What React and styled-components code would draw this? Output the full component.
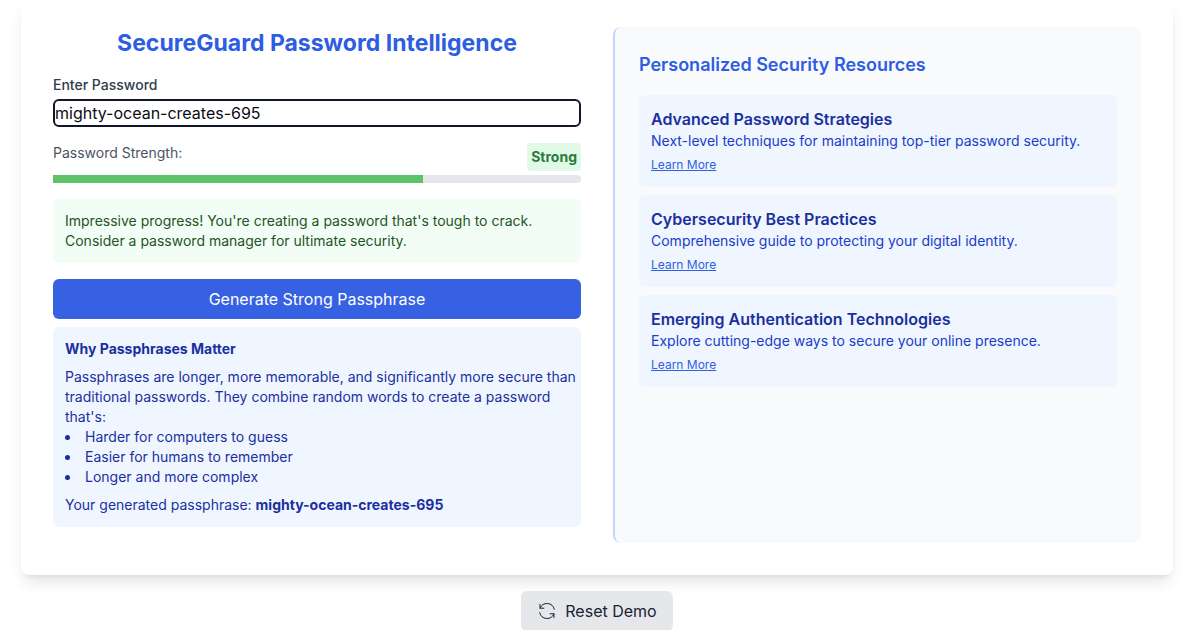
import React, { useState } from "react";
import styled, { createGlobalStyle } from "styled-components";

const GlobalStyle = createGlobalStyle`
  *, *::before, *::after { box-sizing: border-box; }
  body {
    margin: 0;
    background: #fff;
    font-family: Inter, "Liberation Sans", sans-serif;
    font-size: 16px;
    line-height: 24px;
    color: #1f2937;
  }
  h1, h2, h3, p, ul { margin: 0; padding: 0; }
  button, input { font: inherit; }
`;

const Page = styled.div`
  display: flex;
  flex-direction: column;
  align-items: center;
  gap: 16px;
  padding: 0 27px 0 21px;
`;

const Card = styled.main`
  display: grid;
  grid-template-columns: 1fr 1fr;
  gap: 32px;
  width: 100%;
  padding: 27px 32px 32px;
  background: #fff;
  border-radius: 0 0 8px 8px;
  box-shadow: 0 10px 15px -3px rgba(0, 0, 0, 0.1), 0 4px 6px -4px rgba(0, 0, 0, 0.1);
`;

const Column = styled.section`
  display: flex;
  flex-direction: column;
  padding-bottom: 16px;
`;

const Title = styled.h1`
  margin-bottom: 16px;
  font-size: 23px;
  line-height: 32px;
  font-weight: 700;
  text-align: center;
  color: #2d5de1;
`;

const Label = styled.label`
  margin-bottom: 4px;
  font-size: 14px;
  line-height: 20px;
  font-weight: 500;
  color: #303a4c;
`;

const PasswordInput = styled.input`
  width: 100%;
  height: 28px;
  padding: 0;
  border: 2px solid #101828;
  border-radius: 6px;
  background: #fff;
  color: #0b0b14;
  outline: none;
`;

const StrengthRow = styled.div`
  display: flex;
  justify-content: space-between;
  margin: 16px 0 4px;
  font-size: 14px;
  line-height: 20px;
  color: #4b5563;
`;

const StrengthBadge = styled.strong`
  padding: 4px;
  border-radius: 4px;
  background: #e1fae8;
  color: #2d7a3c;
`;

const Track = styled.div`
  height: 8px;
  margin-bottom: 16px;
  background: #e5e7eb;
  border-radius: 0 4px 4px 0;
`;

const Fill = styled.div`
  height: 100%;
  background: #5ec269;
`;

const Feedback = styled.p`
  padding: 12px;
  border-radius: 6px;
  background: #f2fdf5;
  font-size: 14px;
  line-height: 20px;
  color: #1e5527;
`;

const GenerateButton = styled.button`
  margin: 16px 0 8px;
  padding: 8px 16px;
  border: 0;
  border-radius: 6px;
  background: #3761e3;
  color: #fff;
`;

const InfoPanel = styled.div`
  padding: 12px 4px 12px 12px;
  border-radius: 6px;
  background: #eff6ff;
  font-size: 14px;
  line-height: 20px;
  color: #1c2f9f;
`;

const InfoTitle = styled.h3`
  margin-bottom: 8px;
  font-size: 14px;
  font-weight: 700;
`;

const BulletList = styled.ul`
  margin-bottom: 8px;
  list-style: disc inside;
`;

const Resources = styled.aside`
  padding: 24px;
  border-left: 2px solid #bfd6fb;
  border-radius: 8px;
  background: #f9fafc;
`;

const ResourcesTitle = styled.h2`
  margin-bottom: 16px;
  font-size: 18px;
  line-height: 28px;
  font-weight: 600;
  color: #2d5de1;
`;

const ResourceList = styled.div`
  display: flex;
  flex-direction: column;
  gap: 8px;
`;

const Resource = styled.article`
  padding: 12px;
  border-radius: 6px;
  background: #eff6ff;
  font-size: 14px;
  line-height: 20px;
  color: #1a3ccb;
`;

const ResourceTitle = styled.h3`
  font-size: 16px;
  line-height: 24px;
  font-weight: 600;
  color: #1c2f9f;
`;

const LearnMore = styled.a`
  display: block;
  width: fit-content;
  margin-top: 4px;
  font-size: 12px;
  line-height: 20px;
  color: #2f5fe3;
`;

const ResetButton = styled.button`
  display: flex;
  align-items: center;
  gap: 8px;
  padding: 8px 16px;
  border: 0;
  border-radius: 6px;
  background: #e5e7eb;
  color: #1a2233;
`;

const resources = [
  ["Advanced Password Strategies", "Next-level techniques for maintaining top-tier password security."],
  ["Cybersecurity Best Practices", "Comprehensive guide to protecting your digital identity."],
  ["Emerging Authentication Technologies", "Explore cutting-edge ways to secure your online presence."],
];

function RefreshIcon() {
  return (
    <svg width="20" height="20" viewBox="0 0 20 20" fill="none" stroke="currentColor" strokeWidth="1" strokeLinecap="round" strokeLinejoin="round" aria-hidden="true">
      <path d="M3 3.3V7.2H6.9M3.04 7.2A7.5 7.5 0 0 1 17.3 8.3M17 16.7V12.8H13.1M16.96 12.8A7.5 7.5 0 0 1 2.7 11.7" />
    </svg>
  );
}

export default function App() {
  const passphrase = "mighty-ocean-creates-695";
  const [password, setPassword] = useState(passphrase);
  const strength = 70;
  return (
    <>
      <GlobalStyle />
      <Page>
        <Card>
          <Column>
            <Title>SecureGuard Password Intelligence</Title>
            <Label htmlFor="password">Enter Password</Label>
            <PasswordInput id="password" type="text" value={password} onChange={(e) => setPassword(e.target.value)} />
            <StrengthRow>
              <span>Password Strength:</span>
              <StrengthBadge>Strong</StrengthBadge>
            </StrengthRow>
            <Track><Fill style={{ width: `${strength}%` }} /></Track>
            <Feedback>
              Impressive progress! You're creating a password that's tough to crack. Consider a password manager for ultimate security.
            </Feedback>
            <GenerateButton type="button">Generate Strong Passphrase</GenerateButton>
            <InfoPanel>
              <InfoTitle>Why Passphrases Matter</InfoTitle>
              <p>Passphrases are longer, more memorable, and significantly more secure than traditional passwords. They combine random words to create a password that's:</p>
              <BulletList>
                <li>Harder for computers to guess</li>
                <li>Easier for humans to remember</li>
                <li>Longer and more complex</li>
              </BulletList>
              <p>Your generated passphrase: <strong>{passphrase}</strong></p>
            </InfoPanel>
          </Column>
          <Resources>
            <ResourcesTitle>Personalized Security Resources</ResourcesTitle>
            <ResourceList>
              {resources.map(([title, text]) => (
                <Resource key={title}>
                  <ResourceTitle>{title}</ResourceTitle>
                  <p>{text}</p>
                  <LearnMore href="#">Learn More</LearnMore>
                </Resource>
              ))}
            </ResourceList>
          </Resources>
        </Card>
        <ResetButton type="button"><RefreshIcon />Reset Demo</ResetButton>
      </Page>
    </>
  );
}
